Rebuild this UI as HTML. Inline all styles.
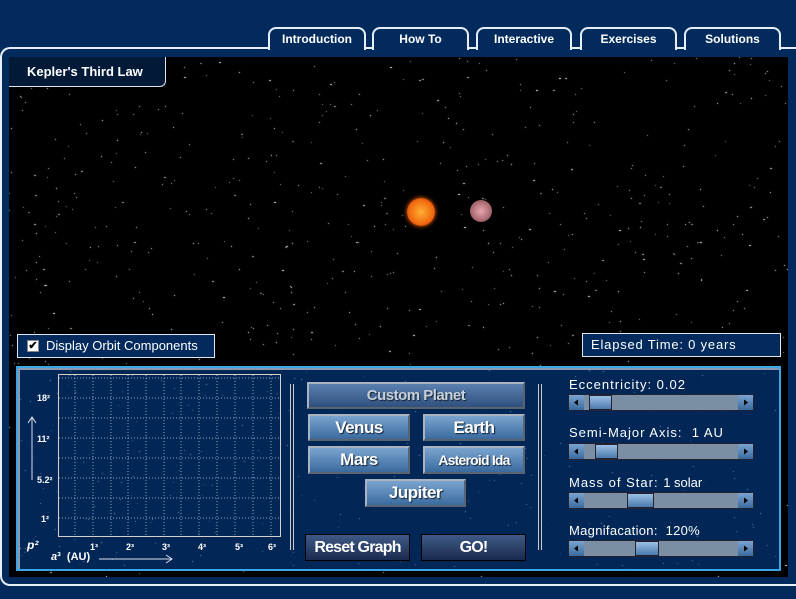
<!DOCTYPE html>
<html><head><style>
*{margin:0;padding:0;box-sizing:border-box}
body{width:796px;height:599px;background:#022a5c;position:relative;overflow:hidden;font-family:"Liberation Sans",sans-serif}
.abs{position:absolute}
.frame{left:0;top:47px;width:800px;height:539px;border:2px solid #e8eef6;border-right:none;border-radius:10px 0 0 10px}
.tab{top:27px;height:23px;border:2px solid #e8eef6;border-bottom:none;border-radius:8px 8px 0 0;background:#022a5c;color:#fff;font-weight:bold;font-size:12px;text-align:center;line-height:20px}
#sky{left:9px;top:57px}
.kt{left:9px;top:57px;width:157px;height:30px;background:#021a38;border:1px solid #dfe6ee;border-top:none;border-left:none;border-radius:0 0 6px 0;color:#fff;font-weight:bold;font-size:13px;line-height:30px;padding-left:18px}
.box{background:#022a5c;border:1px solid #dfe6ee;color:#fff;font-size:13px;line-height:22px}
.panel{left:16px;top:366px;width:765px;height:205px;border:2px solid #3aa6e6;background:rgba(2,42,92,.93)}
.inner{left:18px;top:368px;width:761px;height:201px;border-left:2px solid #8a99ad;border-top:2px solid #8a99ad}
.btn{background:linear-gradient(#7aa4cf,#3a6a9e);border:2px solid #aab4c0;border-right-color:#5a6470;border-bottom-color:#5a6470;color:#fff;font-weight:bold;text-align:center;text-shadow:1px 1px 1px #123;letter-spacing:-.5px}
.btn2{background:linear-gradient(#3e5a86,#1a2a50);border:1px solid #000;color:#fff;font-weight:bold;font-size:16px;text-align:center;line-height:25px;letter-spacing:-.8px}
.lbl{color:#fff;font-size:13px;letter-spacing:1px}
.track{left:568px;width:186px;height:17px;background:#7a8ea4;border:1px solid #223}
.arr{top:0;width:15px;height:15px;background:linear-gradient(#7aa4cf,#3a6a9e)}
.thumb{top:0;height:15px;background:linear-gradient(#9cc0e4,#4a7aae);border:1px solid #223}
.ax{color:#fff;font-size:9px;font-weight:bold}
.vl{width:4px;border-left:1px solid #ccc;border-right:1px solid #ccc}
</style></head><body>
<div class="abs frame"></div>
<div class="abs tab" style="left:268px;width:98px">Introduction</div>
<div class="abs tab" style="left:372px;width:97px">How To</div>
<div class="abs tab" style="left:476px;width:96px">Interactive</div>
<div class="abs tab" style="left:580px;width:97px">Exercises</div>
<div class="abs tab" style="left:684px;width:97px">Solutions</div>
<canvas id="sky" class="abs" width="779" height="520"></canvas>
<div class="abs kt">Kepler's Third Law</div>
<div class="abs" style="left:407px;top:198px;width:28px;height:28px;border-radius:50%;background:radial-gradient(#ffb030,#f06a10 60%,#c03000 90%);box-shadow:0 0 5px #f60"></div>
<div class="abs" style="left:470px;top:200px;width:22px;height:22px;border-radius:50%;background:radial-gradient(#e8a8b0,#a06068 70%,#402024)"></div>
<div class="abs box" style="left:17px;top:334px;width:198px;height:24px;padding-left:28px">Display Orbit Components</div>
<div class="abs" style="left:27px;top:340px;width:12px;height:12px;background:#fff;border:1px solid #888;font-size:11px;line-height:11px;text-align:center;font-weight:bold">✔</div>
<div class="abs box" style="left:582px;top:333px;width:199px;height:24px;padding-left:8px;letter-spacing:.8px">Elapsed Time: 0 years</div>
<div class="abs panel"></div><div class="abs inner"></div>
<canvas id="pst" class="abs" style="left:20px;top:370px" width="757" height="197"></canvas>
<svg class="abs" style="left:58px;top:374px" width="224" height="164">
<rect x="0.5" y="0.5" width="222" height="162" fill="none" stroke="#d8d0c8"/>
<g stroke="#8fa4c0" stroke-dasharray="1,2" stroke-width="1">
<line x1="17" y1="1" x2="17" y2="162"/><line x1="35" y1="1" x2="35" y2="162"/><line x1="53" y1="1" x2="53" y2="162"/><line x1="70" y1="1" x2="70" y2="162"/><line x1="88" y1="1" x2="88" y2="162"/><line x1="106" y1="1" x2="106" y2="162"/><line x1="123" y1="1" x2="123" y2="162"/><line x1="141" y1="1" x2="141" y2="162"/><line x1="159" y1="1" x2="159" y2="162"/><line x1="177" y1="1" x2="177" y2="162"/><line x1="195" y1="1" x2="195" y2="162"/><line x1="213" y1="1" x2="213" y2="162"/>
<line x1="1" y1="4" x2="222" y2="4"/><line x1="1" y1="24" x2="222" y2="24"/><line x1="1" y1="44" x2="222" y2="44"/><line x1="1" y1="64" x2="222" y2="64"/><line x1="1" y1="84" x2="222" y2="84"/><line x1="1" y1="104" x2="222" y2="104"/><line x1="1" y1="124" x2="222" y2="124"/><line x1="1" y1="144" x2="222" y2="144"/>
</g></svg>
<div class="abs ax" style="left:37px;top:393px">18²</div>
<div class="abs ax" style="left:37px;top:434px">11²</div>
<div class="abs ax" style="left:37px;top:475px">5.2²</div>
<div class="abs ax" style="left:41px;top:514px">1²</div>
<svg class="abs" style="left:26px;top:414px" width="12" height="150"><path d="M6 3V66M2 9L6 3L10 9" stroke="#dde" fill="none"/></svg>
<div class="abs" style="left:27px;top:538px;color:#fff;font-size:12px;font-style:italic;font-weight:bold">p²</div>
<div class="abs ax" style="left:90px;top:542px">1³</div><div class="abs ax" style="left:126px;top:542px">2³</div><div class="abs ax" style="left:162px;top:542px">3³</div><div class="abs ax" style="left:198px;top:542px">4³</div><div class="abs ax" style="left:235px;top:542px">5³</div><div class="abs ax" style="left:268px;top:542px">6³</div>
<div class="abs" style="left:51px;top:551px;color:#fff;font-size:11px;font-weight:bold"><i>a</i>³ &nbsp;(AU)</div>
<svg class="abs" style="left:98px;top:553px" width="80" height="12"><path d="M1 6H74M68 2L74 6L68 10" stroke="#dde" fill="none"/></svg>
<div class="abs vl" style="left:290px;top:384px;height:166px"></div>
<div class="abs vl" style="left:538px;top:384px;height:166px"></div>
<div class="abs btn" style="left:307px;top:382px;width:218px;height:27px;font-size:15px;line-height:23px;color:#c8d0da;background:linear-gradient(#5a80b0,#30507e)">Custom Planet</div>
<div class="abs btn" style="left:308px;top:414px;width:102px;height:27px;font-size:17px;line-height:23px">Venus</div>
<div class="abs btn" style="left:423px;top:414px;width:102px;height:27px;font-size:17px;line-height:23px">Earth</div>
<div class="abs btn" style="left:308px;top:446px;width:102px;height:28px;font-size:17px;line-height:24px">Mars</div>
<div class="abs btn" style="left:423px;top:446px;width:102px;height:28px;font-size:14px;line-height:24px;letter-spacing:-.8px">Asteroid Ida</div>
<div class="abs btn" style="left:365px;top:479px;width:101px;height:28px;font-size:17px;line-height:24px">Jupiter</div>
<div class="abs btn2" style="left:305px;top:534px;width:105px;height:27px">Reset Graph</div>
<div class="abs btn2" style="left:421px;top:534px;width:105px;height:27px">GO!</div>
<div class="abs lbl" style="left:569px;top:377px">Eccentricity: 0.02</div>
<div class="abs track" style="top:394px"><div class="abs arr" style="left:0"><svg width="15" height="15"><path d="M5 7.5L9 4.5V10.5Z" fill="#000"/></svg></div><div class="abs thumb" style="left:20px;width:23px"></div><div class="abs arr" style="right:0"><svg width="15" height="15"><path d="M10 7.5L6 4.5V10.5Z" fill="#000"/></svg></div></div>
<div class="abs lbl" style="left:569px;top:425px">Semi-Major Axis: &nbsp;1 AU</div>
<div class="abs track" style="top:443px"><div class="abs arr" style="left:0"><svg width="15" height="15"><path d="M5 7.5L9 4.5V10.5Z" fill="#000"/></svg></div><div class="abs thumb" style="left:26px;width:23px"></div><div class="abs arr" style="right:0"><svg width="15" height="15"><path d="M10 7.5L6 4.5V10.5Z" fill="#000"/></svg></div></div>
<div class="abs lbl" style="left:569px;top:475px">Mass of Star: <span style="letter-spacing:0">1 solar</span></div>
<div class="abs track" style="top:492px"><div class="abs arr" style="left:0"><svg width="15" height="15"><path d="M5 7.5L9 4.5V10.5Z" fill="#000"/></svg></div><div class="abs thumb" style="left:58px;width:27px"></div><div class="abs arr" style="right:0"><svg width="15" height="15"><path d="M10 7.5L6 4.5V10.5Z" fill="#000"/></svg></div></div>
<div class="abs lbl" style="left:569px;top:523px;letter-spacing:.3px">Magnifacation: &nbsp;120%</div>
<div class="abs track" style="top:540px"><div class="abs arr" style="left:0"><svg width="15" height="15"><path d="M5 7.5L9 4.5V10.5Z" fill="#000"/></svg></div><div class="abs thumb" style="left:66px;width:24px"></div><div class="abs arr" style="right:0"><svg width="15" height="15"><path d="M10 7.5L6 4.5V10.5Z" fill="#000"/></svg></div></div>
<script>
var s=12345;function r(){s=(s*16807)%2147483647;return s/2147483647}
var c=document.getElementById('sky').getContext('2d');c.fillStyle='#000';c.fillRect(0,0,779,520);
for(var i=0;i<900;i++){var b=130+r()*125|0;c.fillStyle='rgb('+b+','+b+','+b+')';c.fillRect(r()*779|0,r()*520|0,r()<.2?2:1,1)}
var p=document.getElementById('pst').getContext('2d');
for(var i=0;i<250;i++){p.fillStyle='rgba(170,190,220,'+(0.3+r()*.5)+')';p.fillRect(r()*757|0,r()*197|0,1,1)}
</script>
</body></html>
